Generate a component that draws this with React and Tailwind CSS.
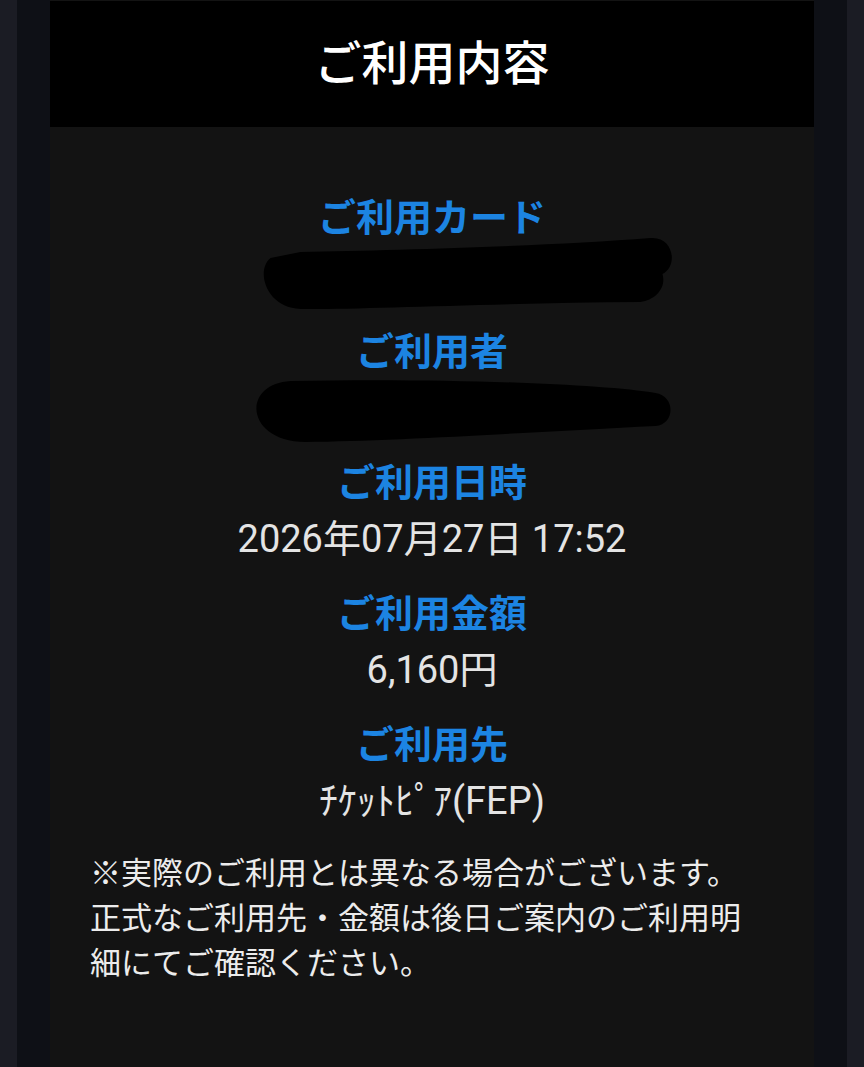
import React from 'react';

const font = { fontFamily: 'Roboto, "Noto Sans CJK JP", sans-serif' };

const Label = ({ children }) => (
  <div className="text-[38px] leading-[48px] font-bold text-[#1c84e2]">{children}</div>
);

const Value = ({ children }) => (
  <div className="text-[38px] leading-[64px] text-[#e4e4e4]">{children}</div>
);

// 塗りつぶし (マスキング) の落書き
const Scribble = ({ d }) => (
  <svg className="block w-full h-[64px] overflow-visible" viewBox="0 0 763 64">
    <path d={d} fill="#000" />
  </svg>
);

export default function App() {
  return (
    <div className="h-[1067px] bg-[#1b1c24] px-[17px]" style={font}>
      <div className="h-full bg-[#0e1016] px-[33px]">
        <div className="h-full bg-[#131313] flex flex-col">
          {/* ヘッダー */}
          <div className="h-[126px] mt-px bg-black flex items-center justify-center">
            <h1 className="text-[47px] font-medium text-white">ご利用内容</h1>
          </div>

          {/* 明細 */}
          <div className="flex flex-col items-center text-center pt-[67px]">
            <Label>ご利用カード</Label>
            <Scribble d="M250,10 C350,8 500,4 600,-4 C623,-6 628,24 612,32 C616,46 605,58 590,60 C450,61 300,68 250,67 C215,66 205,28 220,16 Z" />
            <div className="mt-[22px]">
              <Label>ご利用者</Label>
            </div>
            <Scribble d="M240,5 C400,2 550,8 605,17 C625,20 625,48 605,50 C500,55 350,65 255,66 C195,66 190,8 240,5 Z" />

            <div className="mt-[19px]">
              <Label>ご利用日時</Label>
            </div>
            <Value>2026年07月27日 17:52</Value>

            <div className="mt-[19px]">
              <Label>ご利用金額</Label>
            </div>
            <Value>6,160円</Value>

            <div className="mt-[19px]">
              <Label>ご利用先</Label>
            </div>
            <Value>ﾁｹｯﾄﾋﾟｱ(FEP)</Value>
          </div>

          {/* 注意書き */}
          <p className="mt-[18px] pl-10 text-[31px] leading-[45px] text-[#ececec]">
            ※実際のご利用とは異なる場合がございます。
            <br />
            正式なご利用先・金額は後日ご案内のご利用明
            <br />
            細にてご確認ください。
          </p>
        </div>
      </div>
    </div>
  );
}
